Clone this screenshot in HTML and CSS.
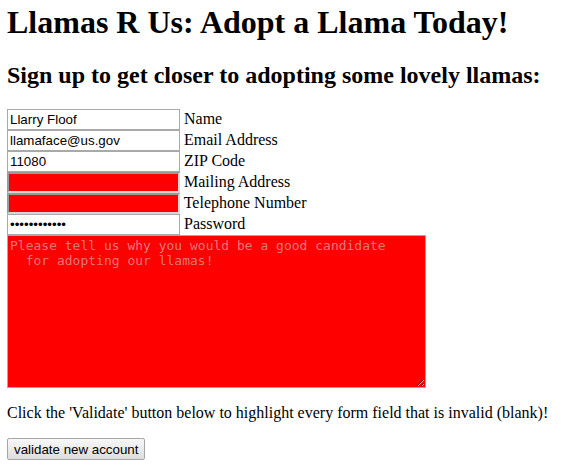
FILE: index.html
```html
<!DOCTYPE html>
<html>
<head>
<meta charset="utf-8">
<title>Llamas R Us</title>
<link rel="stylesheet" href="styles.css">
</head>
<body>
<h1 class="title">Llamas R Us: Adopt a Llama Today!</h1>
<h2 class="subtitle">Sign up to get closer to adopting some lovely llamas:</h2>
<form class="signup">
<input class="field" type="text" value="Llarry Floof"> Name<br>
<input class="field" type="text" value="llamaface@us.gov"> Email Address<br>
<input class="field" type="text" value="11080"> ZIP Code<br>
<input class="field invalid" type="text" value=""> Mailing Address<br>
<input class="field invalid" type="text" value=""> Telephone Number<br>
<input class="field" type="password" value="llamallama12"> Password<br>
<textarea class="why" placeholder="Please tell us why you would be a good candidate&#10;  for adopting our llamas!"></textarea>
</form>
<p class="hint">Click the 'Validate' button below to highlight every form field that is invalid (blank)!</p>
<button class="validate" type="button">validate new account</button>
</body>
</html>
```
FILE: styles.css
```css
body {
  font-family: "Liberation Serif", serif;
  font-size: 16px;
  margin: 4px 8px 8px 7px;
  color: #000;
  background: #fff;
}
.title {
  font-size: 32px;
  margin: 0 0 21px;
}
.subtitle {
  font-size: 24px;
  margin: 0 0 20px;
}
.signup {
  margin: 0;
}
.field {
  font-family: "Liberation Sans", sans-serif;
  font-size: 13.33px;
  width: 173px;
  height: 21px;
  box-sizing: border-box;
  margin: 0;
  padding: 1px 2px;
  border: 1px solid #a9a9a9;
  background: #fff;
  color: #000;
  outline: none;
}
.field.invalid {
  background-color: #ff0000;
  border-width: 2px;
  border-color: #9a9a9a #d6d6d6 #d6d6d6 #9a9a9a;
  padding: 0 1px;
}
.why {
  font-family: "DejaVu Sans Mono", monospace;
  font-size: 13px;
  width: 419px;
  height: 153px;
  box-sizing: border-box;
  margin: 0;
  padding: 2px;
  border: 1px solid #a9a9a9;
  background-color: #ff0000;
  vertical-align: bottom;
}
.why::placeholder {
  color: rgba(200, 200, 200, 0.62);
}
.hint {
  margin: 16px 0;
}
.validate {
  font-family: "Liberation Sans", sans-serif;
  font-size: 13.33px;
  margin: 0;
  height: 22px;
  padding: 1px 6px;
  border: 1px solid #a6a6a6;
  border-radius: 2px;
  background: linear-gradient(#f8f8f8, #dddddd);
  color: #000;
}
```
